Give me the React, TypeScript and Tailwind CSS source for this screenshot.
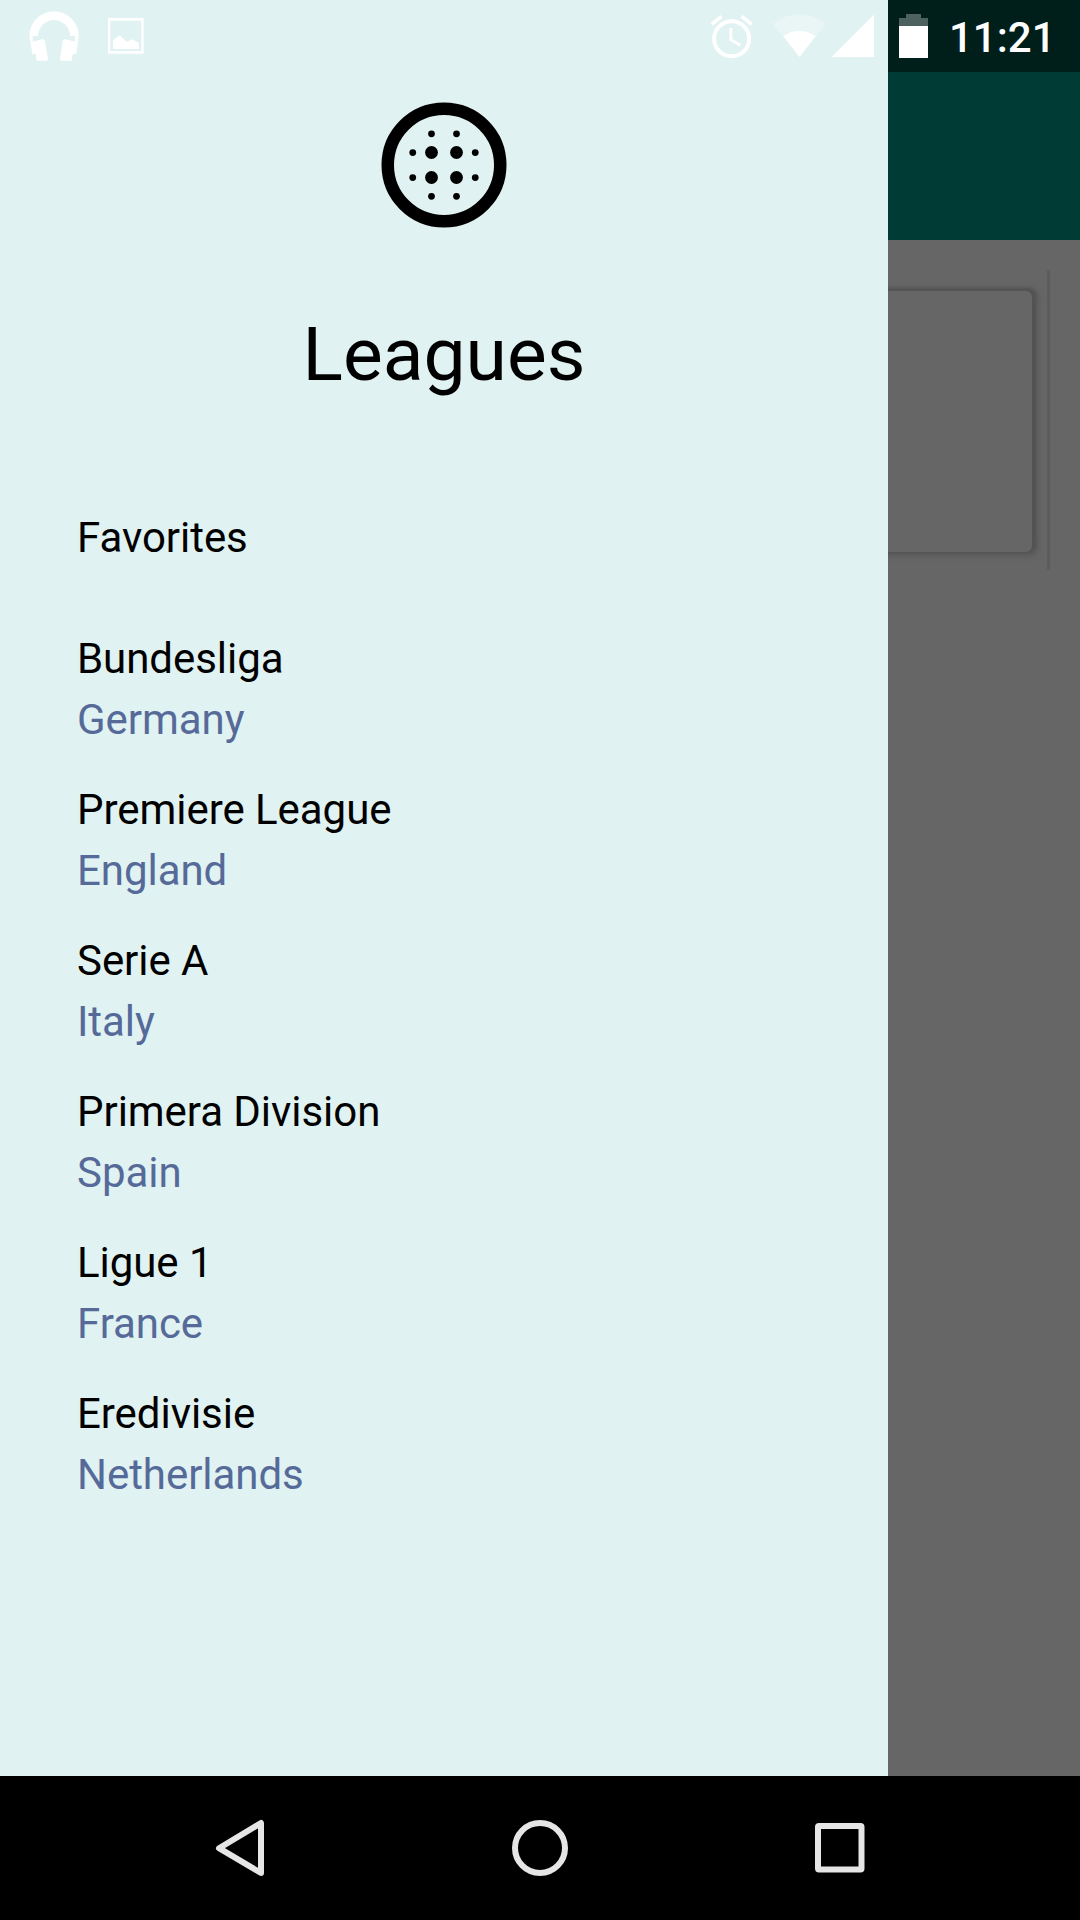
import React from "react";

const leagues = [
  { name: "Bundesliga", country: "Germany" },
  { name: "Premiere League", country: "England" },
  { name: "Serie A", country: "Italy" },
  { name: "Primera Division", country: "Spain" },
  { name: "Ligue 1", country: "France" },
  { name: "Eredivisie", country: "Netherlands" },
];

function HeadphonesIcon() {
  return (
    <svg viewBox="87 33 150 150" className="h-[50px] w-[50px]" fill="#fff">
      <path d="M88 108a74 74 0 0 1 148 0L229 162H218L215 182H185Q180 182 180 177L188 123Q189 117 195 117L225 125V108H210a48 48 0 0 0-96 0H98V125L128 117Q134 117 135 123L144 177Q144 182 139 182H110L107 162H97Z" />
    </svg>
  );
}

function ImageIcon() {
  return (
    <svg viewBox="324 54 108 108" className="ml-[29px] h-9 w-9" fill="#fff">
      <path fillRule="evenodd" d="M324 54H431V161H324ZM331 62V153H424V62Z" />
      <path d="M339 121L359 106L380 125L396 118L417 129V147H339Z" />
    </svg>
  );
}

function AlarmIcon() {
  return (
    <svg viewBox="60 42 129 135" className="h-[45px] w-[43px]" fill="none" stroke="#fff">
      <circle cx="125" cy="116" r="52.5" strokeWidth="12" />
      <path d="M122.500 84V119L151 136" strokeWidth="9" />
      <path d="M65 73L95 49M155 49L185 73" strokeWidth="11" />
    </svg>
  );
}

function WifiIcon() {
  return (
    <svg viewBox="249 42 159 129" className="ml-[20px] h-[43px] w-[53px]" fill="#fff">
      <path d="M249 72Q284 43 328.500 43T408 72L328.500 171Z" opacity=".3" />
      <path d="M280 109Q302 93 328.500 93T377 109L328.500 171Z" />
    </svg>
  );
}

function SignalIcon() {
  return (
    <svg viewBox="0 0 43 43" className="ml-[5px] h-[43px] w-[43px]" fill="#fff">
      <path d="M43 .5V43H.5Z" />
    </svg>
  );
}

function BatteryIcon() {
  return (
    <svg viewBox="0 0 29 44" className="ml-[25px] h-11 w-[29px]" fill="#fff">
      <path d="M7 0H22V4H29V12H0V4H7Z" opacity=".3" />
      <path d="M0 12H29V44H0Z" />
    </svg>
  );
}

function LeaguesLogo() {
  const large = [[10, 10], [14, 10], [10, 14], [14, 14]];
  const small = [[10, 7], [14, 7], [7, 10], [17, 10], [7, 14], [17, 14], [10, 17], [14, 17]];
  return (
    <svg viewBox="0 0 24 24" className="h-[150px] w-[150px]">
      <circle cx="12" cy="12" r="9" fill="none" stroke="#000" strokeWidth="2" />
      {large.map(([x, y]) => <circle key={`${x}-${y}`} cx={x} cy={y} r="1.03" />)}
      {small.map(([x, y]) => <circle key={`${x}-${y}`} cx={x} cy={y} r=".54" />)}
    </svg>
  );
}

function StatusBar() {
  return (
    <div className="absolute inset-x-0 top-0 flex h-[72px] items-start pl-[29px] text-white">
      <div className="flex items-start pt-[11px]">
        <HeadphonesIcon />
        <div className="pt-[7px]"><ImageIcon /></div>
      </div>
      <div className="ml-auto flex items-start pt-[14px] pr-[25px]">
        <AlarmIcon />
        <WifiIcon />
        <SignalIcon />
        <BatteryIcon />
        <span className="ml-[21px] -mt-[1px] w-[106px] whitespace-nowrap text-right text-[42px] leading-[49px] font-medium">11:21</span>
      </div>
    </div>
  );
}

function Drawer() {
  return (
    <aside className="absolute inset-y-0 left-0 flex w-[888px] flex-col bg-[#e0f2f1]">
      <header className="flex flex-col items-center pt-[90px]">
        <LeaguesLogo />
        <h1 className="mt-[69px] text-[75px] leading-[90px] text-black">Leagues</h1>
      </header>
      <nav className="mt-[108px] flex flex-col pl-[77px] text-[42px] leading-[61px] tracking-[-0.05px] text-black">
        <div className="mb-[60px]">Favorites</div>
        <ul className="flex flex-col gap-[29px]">
          {leagues.map((league) => (
            <li key={league.name}>
              <div>{league.name}</div>
              <div className="text-[#566a99]">{league.country}</div>
            </li>
          ))}
        </ul>
      </nav>
    </aside>
  );
}

function NavigationBar() {
  return (
    <footer className="grid h-36 grid-cols-3 items-center justify-items-center bg-black px-[90px]">
      <svg viewBox="0 0 60 60" className="h-[60px] w-[60px]" fill="none" stroke="#e6e6e6" strokeWidth="6" strokeLinejoin="round">
        <path d="M51 5V55L9 30.200Z" />
      </svg>
      <svg viewBox="0 0 60 60" className="h-[60px] w-[60px]" fill="none" stroke="#e6e6e6" strokeWidth="6">
        <circle cx="30" cy="30" r="25" />
      </svg>
      <svg viewBox="0 0 60 60" className="h-[60px] w-[60px]" fill="none" stroke="#e6e6e6" strokeWidth="6" strokeLinejoin="round">
        <rect x="8" y="8" width="43.500" height="43.500" rx="1" />
      </svg>
    </footer>
  );
}

export default function App() {
  return (
    <div className="flex h-[1920px] w-[1080px] flex-col overflow-hidden font-['Roboto',sans-serif]">
      <div className="relative flex flex-1 flex-col bg-[#666666]">
        <div className="h-[72px] bg-[#001f1b]" />
        <div className="h-[168px] bg-[#003c35]" />
        <div className="mt-[30px] mr-[30px] flex h-[300px] items-start border-r-[3px] border-[#5c5c5c] pt-[21px] pr-[15px]">
          <div className="h-[261px] flex-1 rounded-[6px] bg-[#666666] shadow-[2px_-1px_3px_2px_#535353,3px_1px_6px_3px_#595959]" />
        </div>
        <Drawer />
        <StatusBar />
      </div>
      <NavigationBar />
    </div>
  );
}
